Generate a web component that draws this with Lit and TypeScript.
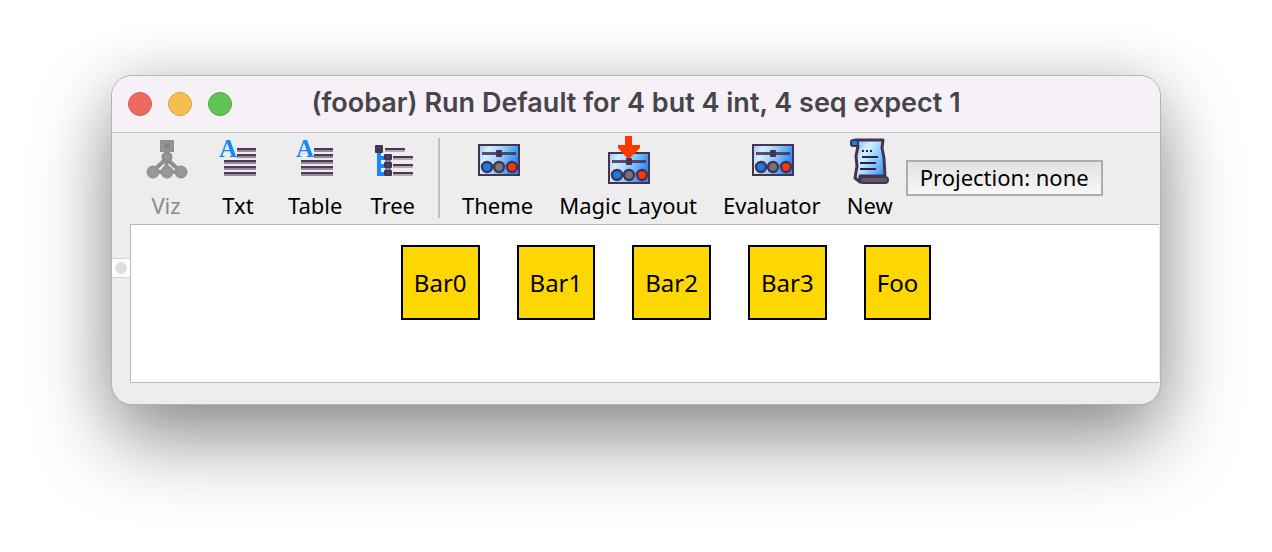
import { LitElement, html, svg, css } from "lit";
import { customElement, property } from "lit/decorators.js";

const INK = "#46344f";

const textLines = svg`
  ${[12, 18, 24, 30, 36].map((y, i) => svg`
    <rect x=${i < 2 ? 23 : 10} y=${y} width=${i < 2 ? 19 : 32} height="2" fill="#4d3a55"/>
    <rect x=${i < 2 ? 23 : 10} y=${y + 2} width=${i < 2 ? 19 : 32} height="2" fill="#9b879d"/>`)}
  <text x="5" y="21" font-family="Liberation Serif, serif" font-weight="700" font-size="25" fill="#1288ff">A</text>`;

const panel = (top: number) => svg`
  <defs>
    <linearGradient id="sheen" x1="0" y1="0" x2="1" y2="0.3">
      <stop offset="0" stop-color="#8fc6fb"/>
      <stop offset="0.25" stop-color="#d9edff"/>
      <stop offset="0.5" stop-color="#a9d6ff"/>
      <stop offset="1" stop-color="#2f8df5"/>
    </linearGradient>
  </defs>
  <g transform="translate(0 ${top})">
    <rect x="5" y="1" width="40" height="30" fill="url(#sheen)" stroke=${INK} stroke-width="2"/>
    <rect x="8" y="8" width="34" height="3" fill=${INK} opacity="0.85"/>
    <rect x="22" y="6" width="6" height="7" rx="1" fill=${INK}/>
    ${[["13", "#0d80f5"], ["25", "#77757f"], ["38", "#fb3a0c"]].map(([x, c]) => svg`
      <circle cx=${x} cy="23" r="5" fill=${c} stroke=${INK} stroke-width="2.500"/>`)}
  </g>`;

const icons: Record<string, unknown> = {
  viz: svg`
    <g stroke="#8f8f8f" stroke-width="3" fill="#999999">
      <path d="M24.500 14v22M24 23L11 35M25 23L38 35M11 36H38" stroke-width="4"/>
      <rect x="19" y="5" width="12" height="10" stroke-width="2"/>
      <rect x="22" y="7" width="6" height="6" stroke="none" fill="#858585"/>
      <circle cx="25" cy="21" r="4"/>
      <circle cx="11" cy="36" r="5" stroke="#949494"/>
      <circle cx="25" cy="36" r="5" stroke="#949494"/>
      <circle cx="39" cy="36" r="5" stroke="#949494"/>
    </g>`,
  text: textLines,
  tree: svg`
    <path d="M10 14V38H16M10 22H16M10 30H16" fill="none" stroke="#1688ff" stroke-width="4"/>
    <rect x="6" y="9" width="8" height="8" rx="1" fill=${INK}/>
    <rect x="9" y="11" width="2" height="2" fill="#1c4c92"/>
    <rect x="16" y="12" width="20" height="2" fill=${INK}/>
    <rect x="16" y="14" width="20" height="2" fill="#b5a8b7"/>
    <rect x="16" y="18" width="6" height="22" fill="#8a7d92"/>
    ${[18, 26, 34].map((y) => svg`
      <rect x="15" y=${y} width="8" height="6" rx="1" fill=${INK}/>
      <rect x="18" y=${y + 2} width="2" height="2" fill="#1f5fb8"/>
      <rect x="24" y=${y + 2} width="20" height="2" fill=${INK}/>
      <rect x="24" y=${y + 4} width="20" height="2" fill="#b5a8b7"/>`)}`,
  panel: panel(8),
  magic: svg`${panel(16)}
    <path d="M21 0h7v9h8v3L26 22h-3L14 12V9h7z" fill="#ff3800"/>`,
  scroll: svg`
    <defs>
      <linearGradient id="paper" x1="0" y1="0" x2="1" y2="0.8">
        <stop offset="0" stop-color="#6fb4fb"/>
        <stop offset="0.35" stop-color="#d6efff"/>
        <stop offset="0.65" stop-color="#8ccaff"/>
        <stop offset="1" stop-color="#318ef0"/>
      </linearGradient>
    </defs>
    <path d="M9 4H37L36 12L38 22L39 40H14V46L9 42L11 30L10 20L12 10Z" fill="url(#paper)" stroke=${INK} stroke-width="3" stroke-linejoin="round"/>
    <rect x="5" y="4" width="7" height="6" rx="2" fill="#177ee6" stroke=${INK} stroke-width="2"/>
    <rect x="14" y="41" width="28" height="6" rx="3" fill="#5f5868" stroke=${INK} stroke-width="2"/>
    <path d="M16 15h2M20 15h2M24 15h2M16 21h16M14 27h16M14 33h16" stroke="#2b2440" stroke-width="2"/>`,
};

@customElement("tool-button")
export class ToolButton extends LitElement {
  @property() icon = "";
  @property() label = "";
  @property({ type: Boolean }) disabled = false;

  static styles = css`
    :host { display: block; }
    .tool {
      display: flex;
      flex-direction: column;
      align-items: center;
      box-sizing: border-box;
      min-width: 72px;
      padding: 0 var(--tool-padding, 14px);
      border: 0;
      background: none;
      color: #000;
      font: 22px/32px "Noto Sans", "Open Sans", sans-serif;
      white-space: nowrap;
    }
    .tool:disabled { color: #8c8c8c; }
    .glyph { display: block; width: 48px; height: 48px; margin: 0 -4px 5px; }
  `;

  render() {
    return html`<button class="tool" ?disabled=${this.disabled}>
      <svg class="glyph" viewBox="0 0 48 48" aria-hidden="true">${icons[this.icon]}</svg>
      <span>${this.label}</span>
    </button>`;
  }
}

@customElement("app-root")
export class AppRoot extends LitElement {
  static styles = css`
    :host {
      display: block;
      box-sizing: border-box;
      min-height: 100vh;
      overflow: hidden;
      padding: 76px 112px 148px;
      background: #fff;
      font-family: "Noto Sans", "Open Sans", sans-serif;
    }
    .window {
      border-radius: 20px;
      background: #ededed;
      box-shadow: 0 0 0 1px #b4b4b4, 0 36px 80px rgba(0, 0, 0, 0.42), 0 0 60px rgba(0, 0, 0, 0.12);
      overflow: hidden;
    }
    .titlebar {
      display: grid;
      grid-template-columns: 1fr auto 1fr;
      align-items: center;
      height: 56px;
      padding: 0 16px;
      background: #f6f1f6;
      border-bottom: 1px solid #c6c3c6;
    }
    .lights { display: flex; gap: 16px; }
    .light { width: 24px; height: 24px; padding: 0; border-radius: 50%; border: 1px solid; }
    .close { background: #ed6a5e; border-color: #d5574c; }
    .minimise { background: #f5bf4f; border-color: #d9a13c; }
    .zoom { background: #61c554; border-color: #51a73e; }
    .title {
      margin: 0 0 2px;
      font: 600 27px/32px Inter, sans-serif;
      color: #47444a;
      white-space: nowrap;
    }
    .toolbar { display: flex; align-items: flex-start; padding: 3px 18px; }
    .actions { display: flex; --tool-padding: 13px; }
    .separator { width: 2px; height: 80px; margin: 2px 9px 0; background: #c0c0c0; }
    .projection {
      box-sizing: border-box;
      height: 36px;
      margin-top: 24px;
      padding: 0 12px 2px;
      border: 2px solid #adadad;
      background: linear-gradient(#e2e2e2, #f8f8f8);
      color: #000;
      font: 22px/30px "Noto Sans", "Open Sans", sans-serif;
      white-space: nowrap;
    }
    .main { display: grid; grid-template-columns: 18px 1fr; padding: 0 1px 21px 0; }
    .handle {
      display: grid;
      place-items: center;
      height: 20px;
      margin-top: 34px;
      box-sizing: border-box;
      padding: 0;
      border: 1px solid #d6d6d6;
      border-width: 1px 0;
      background: #fff;
    }
    .knob { width: 12px; height: 12px; border-radius: 50%; background: #dfdfdf; }
    .canvas {
      display: flex;
      justify-content: center;
      align-items: flex-start;
      gap: 37px;
      box-sizing: border-box;
      min-height: 159px;
      padding: 20px 0 20px 42px;
      border: 1px solid #b9b9b9;
      border-right: 0;
      background: #fff;
    }
    .node {
      box-sizing: border-box;
      height: 75px;
      padding: 0 11px;
      border: 2px solid #000;
      background: #ffd700;
      font-size: 24px;
      line-height: 71px;
    }
  `;

  render() {
    return html`
      <main class="window">
        <header class="titlebar">
          <div class="lights">
            <button class="light close" aria-label="Close"></button>
            <button class="light minimise" aria-label="Minimise"></button>
            <button class="light zoom" aria-label="Zoom"></button>
          </div>
          <h1 class="title">(foobar) Run Default for 4 but 4 int, 4 seq expect 1</h1>
        </header>
        <nav class="toolbar">
          <tool-button icon="viz" label="Viz" disabled></tool-button>
          <tool-button icon="text" label="Txt"></tool-button>
          <tool-button icon="text" label="Table"></tool-button>
          <tool-button icon="tree" label="Tree"></tool-button>
          <div class="separator"></div>
          <div class="actions">
            <tool-button icon="panel" label="Theme"></tool-button>
            <tool-button icon="magic" label="Magic Layout"></tool-button>
            <tool-button icon="panel" label="Evaluator"></tool-button>
            <tool-button icon="scroll" label="New"></tool-button>
          </div>
          <button class="projection">Projection: none</button>
        </nav>
        <section class="main">
          <button class="handle" aria-label="Expand side panel"><span class="knob"></span></button>
          <div class="canvas">
            ${["Bar0", "Bar1", "Bar2", "Bar3", "Foo"].map((name) => html`<div class="node">${name}</div>`)}
          </div>
        </section>
      </main>
    `;
  }
}
